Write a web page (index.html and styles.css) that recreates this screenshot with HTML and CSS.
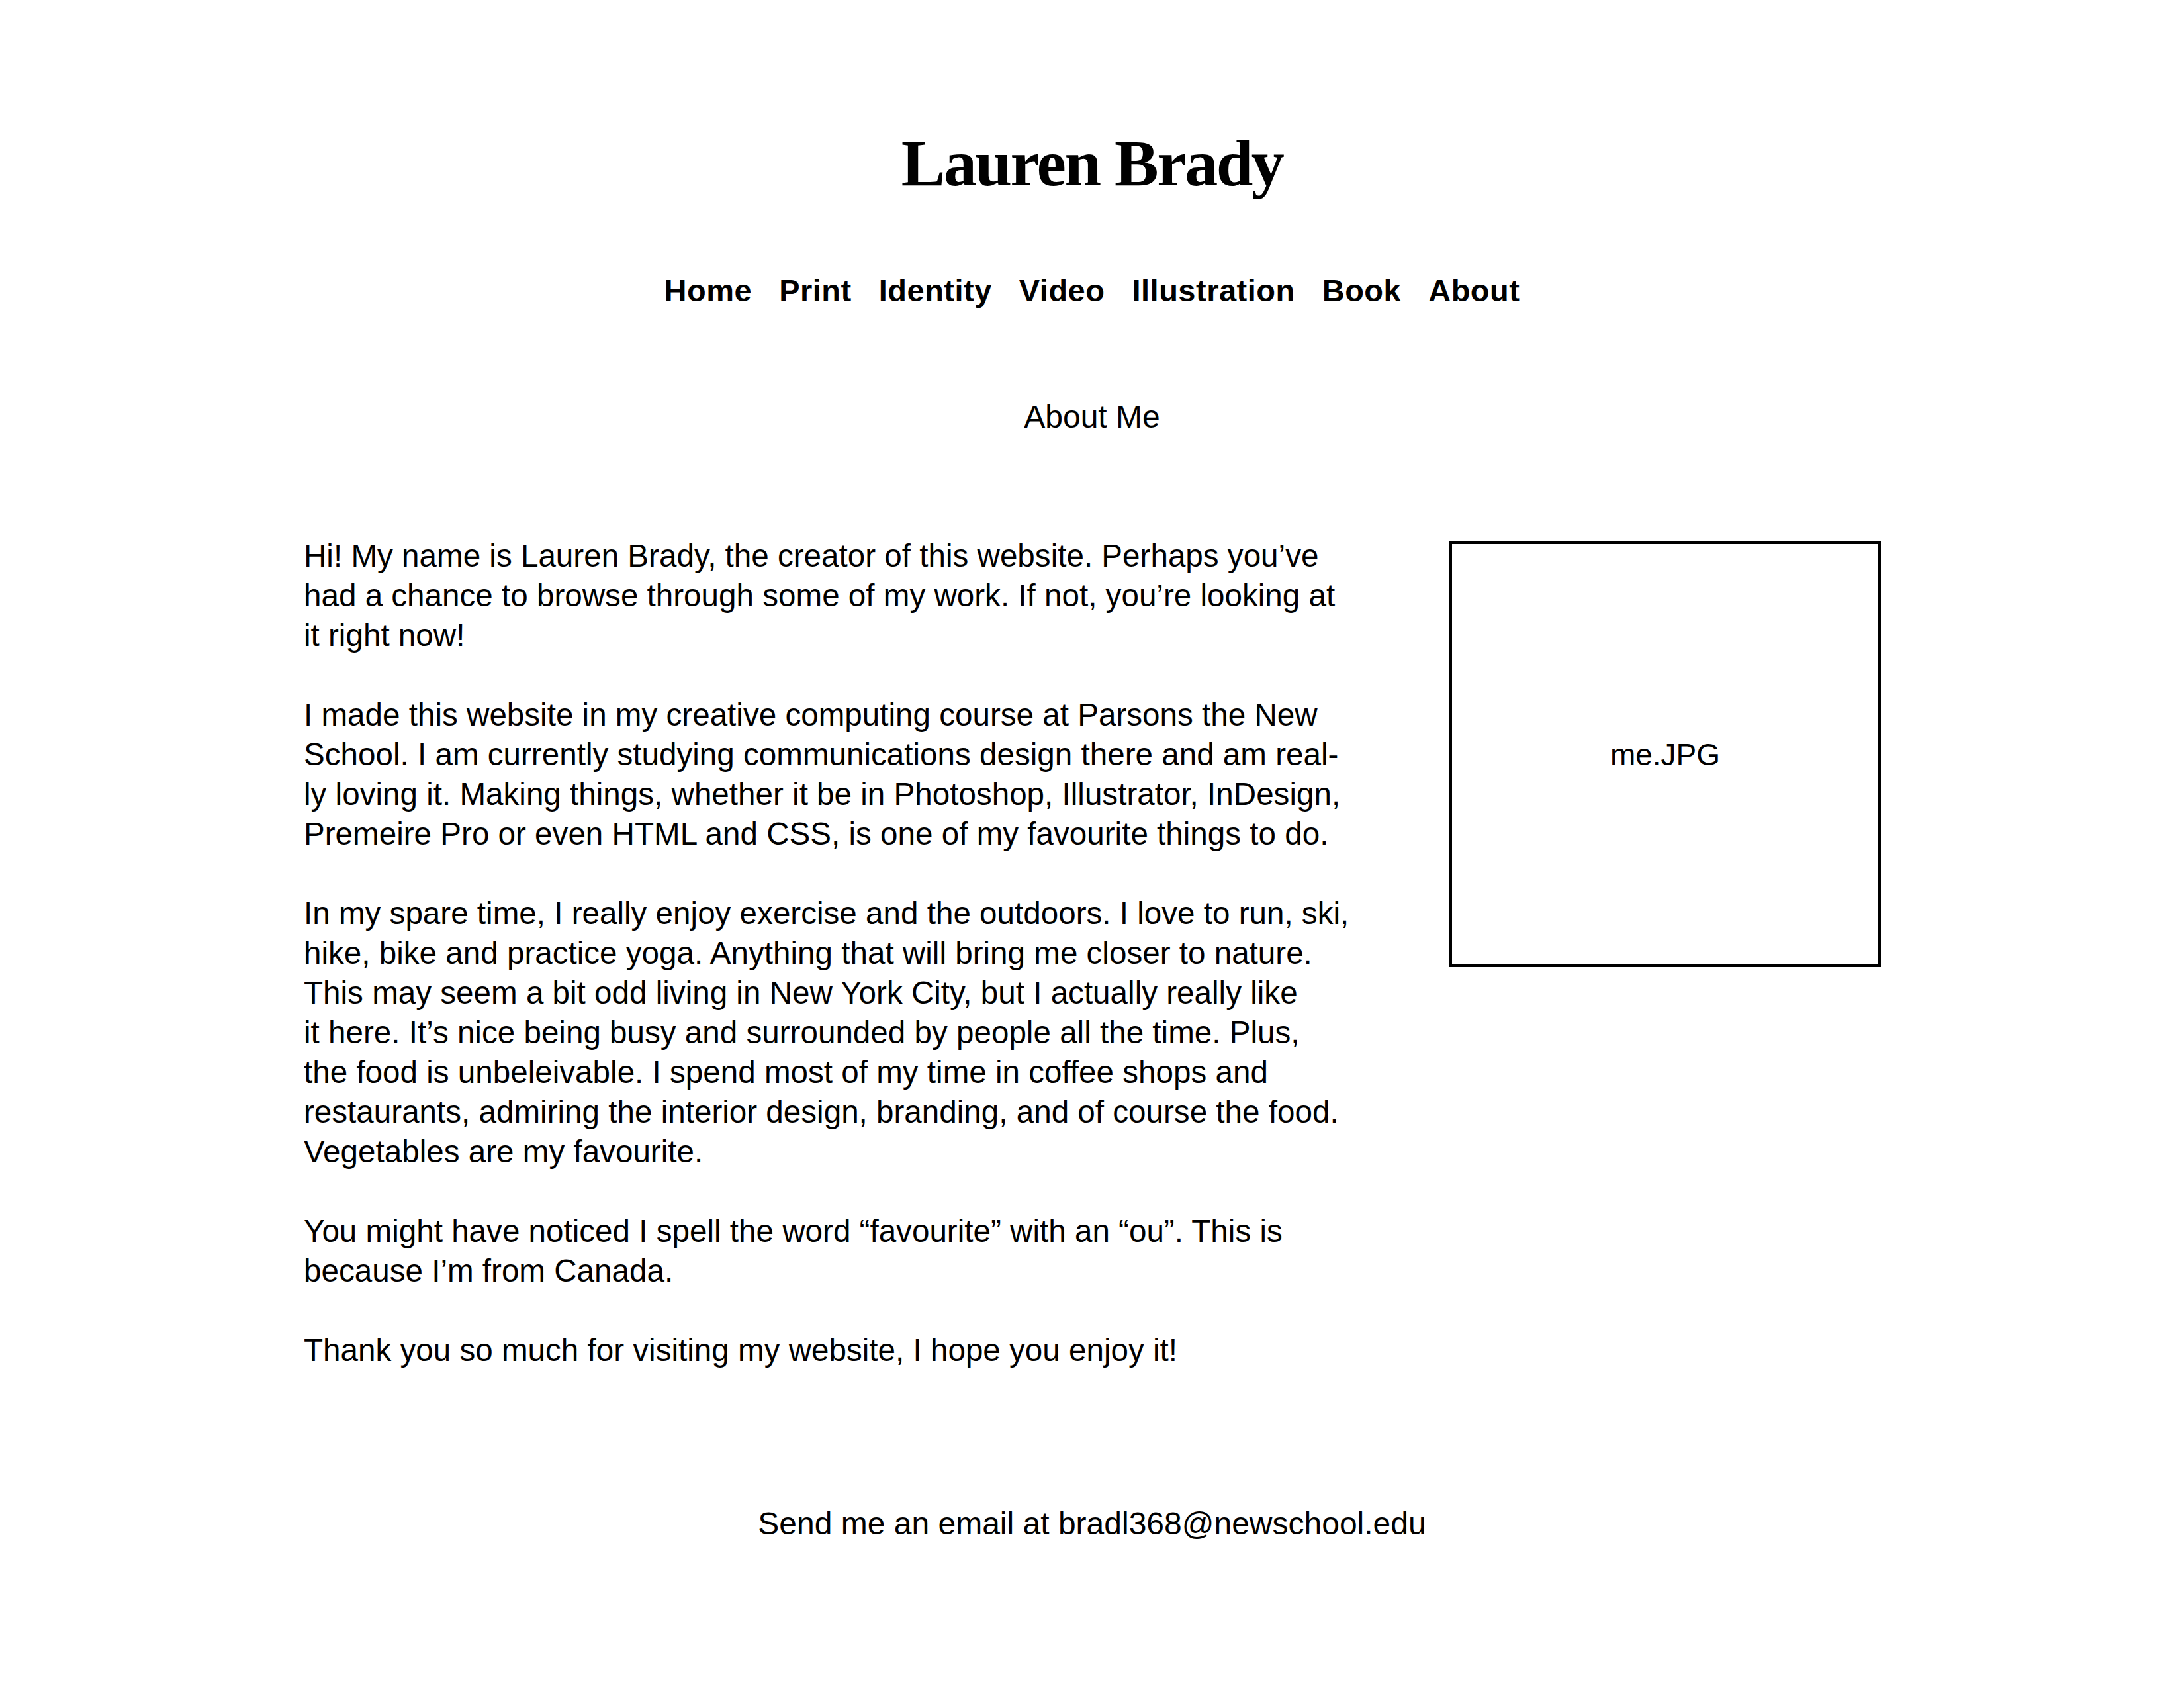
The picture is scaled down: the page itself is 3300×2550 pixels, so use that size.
FILE: index.html
```html
<!DOCTYPE html>
<html lang="en">
<head>
<meta charset="utf-8">
<title>Lauren Brady – About</title>
<link rel="stylesheet" href="styles.css">
</head>
<body>
<header class="masthead">
  <h1 class="site-title">Lauren Brady</h1>
  <nav class="main-nav">
    <a href="#">Home</a>
    <a href="#">Print</a>
    <a href="#">Identity</a>
    <a href="#">Video</a>
    <a href="#">Illustration</a>
    <a href="#">Book</a>
    <a href="#">About</a>
  </nav>
</header>
<main>
  <h2 class="page-heading">About Me</h2>
  <section class="about">
    <div class="bio">
      <p>Hi! My name is Lauren Brady, the creator of this website. Perhaps you’ve<br>had a chance to browse through some of my work. If not, you’re looking at<br>it right now!</p>
      <p>I made this website in my creative computing course at Parsons the New<br>School. I am currently studying communications design there and am real-<br>ly loving it. Making things, whether it be in Photoshop, Illustrator, InDesign,<br>Premeire Pro or even HTML and CSS, is one of my favourite things to do.</p>
      <p>In my spare time, I really enjoy exercise and the outdoors. I love to run, ski,<br>hike, bike and practice yoga. Anything that will bring me closer to nature.<br>This may seem a bit odd living in New York City, but I actually really like<br>it here. It’s nice being busy and surrounded by people all the time. Plus,<br>the food is unbeleivable. I spend most of my time in coffee shops and<br>restaurants, admiring the interior design, branding, and of course the food.<br>Vegetables are my favourite.</p>
      <p>You might have noticed I spell the word “favourite” with an “ou”. This is<br>because I’m from Canada.</p>
      <p>Thank you so much for visiting my website, I hope you enjoy it!</p>
    </div>
    <figure class="portrait"><span class="portrait-label">me.JPG</span></figure>
  </section>
</main>
<footer class="contact">Send me an email at bradl368@newschool.edu</footer>
</body>
</html>
```
FILE: styles.css
```css
html, body {
  margin: 0;
  padding: 0;
  background: #ffffff;
  color: #000000;
}

body {
  font-family: "Liberation Sans", Arial, sans-serif;
}

.masthead {
  display: flex;
  flex-direction: column;
  align-items: center;
  padding-top: 197px;
}

.site-title {
  margin: 0;
  font-family: "Liberation Serif", "Times New Roman", serif;
  font-weight: 700;
  font-size: 100px;
  line-height: 100px;
  letter-spacing: -2.5px;
}

.main-nav {
  display: flex;
  gap: 41px;
  margin-top: 118px;
}

.main-nav a {
  color: #000000;
  text-decoration: none;
  font-weight: 700;
  font-size: 47px;
  line-height: 47px;
  letter-spacing: 0.5px;
}

.page-heading {
  margin: 144px 0 0;
  text-align: center;
  font-weight: 400;
  font-size: 48px;
  line-height: 48px;
}

.about {
  display: flex;
  justify-content: space-between;
  align-items: flex-start;
  margin-top: 156px;
  padding: 0 458px 0 459px;
}

.bio {
  font-size: 47.6px;
  line-height: 60px;
  white-space: nowrap;
}

.bio p {
  margin: 0 0 60px;
}

.bio p:last-child {
  margin-bottom: 0;
}

.portrait {
  box-sizing: border-box;
  margin: 8px 0 0;
  width: 652px;
  height: 643px;
  border: 4px solid #000000;
  display: flex;
  align-items: center;
  justify-content: center;
}

.portrait-label {
  font-size: 46px;
  line-height: 46px;
}

.contact {
  margin-top: 208px;
  text-align: center;
  font-size: 48px;
  line-height: 48px;
}
```
